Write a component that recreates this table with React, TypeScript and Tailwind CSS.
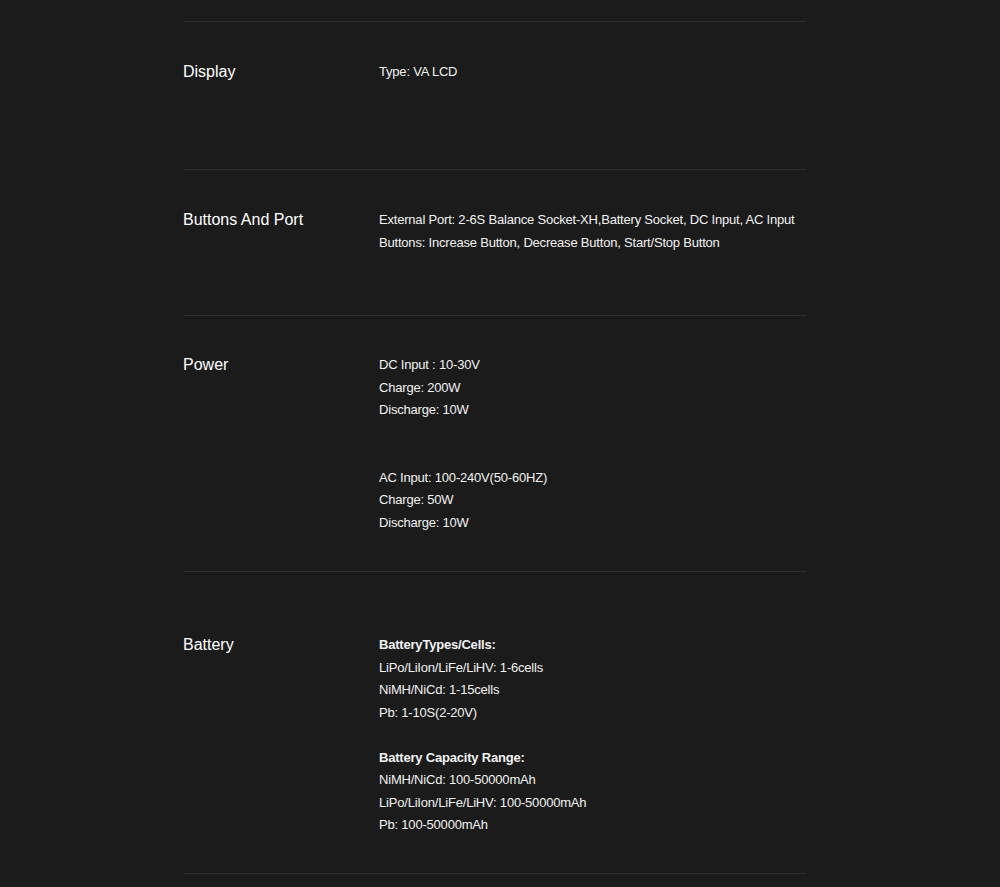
const specs = [
  {
    title: "Display",
    pad: "pt-[39px] pb-[37px]",
    lines: ["Type: VA LCD"],
  },
  {
    title: "Buttons And Port",
    pad: "pt-[39px] pb-[35px]",
    lines: [
      "External Port: 2-6S Balance Socket-XH,Battery Socket, DC Input, AC Input",
      "Buttons: Increase Button, Decrease Button, Start/Stop Button",
    ],
  },
  {
    title: "Power",
    pad: "pt-[38px] pb-[37px]",
    lines: [
      "DC Input : 10-30V",
      "Charge: 200W",
      "Discharge: 10W",
      "",
      "",
      "AC Input: 100-240V(50-60HZ)",
      "Charge: 50W",
      "Discharge: 10W",
    ],
  },
  {
    title: "Battery",
    pad: "pt-[62px] pb-[36px]",
    lines: [
      "*BatteryTypes/Cells:",
      "LiPo/LiIon/LiFe/LiHV: 1-6cells",
      "NiMH/NiCd: 1-15cells",
      "Pb: 1-10S(2-20V)",
      "",
      "*Battery Capacity Range:",
      "NiMH/NiCd: 100-50000mAh",
      "LiPo/LiIon/LiFe/LiHV: 100-50000mAh",
      "Pb: 100-50000mAh",
    ],
  },
];

export default function App() {
  return (
    <div className="min-h-screen bg-[#1b1b1b] pt-[21px] font-['Liberation_Sans',Arial,sans-serif] text-[#f2f2f2]">
      <div className="ml-[183px] w-[623px] border-t border-[#2e2e2e]">
        {specs.map((s) => (
          <div key={s.title} className={`flex border-b border-[#2e2e2e] ${s.pad}`}>
            <h3 className="w-[196px] shrink-0 text-[16px] leading-[22px] text-white">{s.title}</h3>
            <div className="min-h-[71px] whitespace-nowrap text-[13px] leading-[22.5px] tracking-[-0.2px]">
              {s.lines.map((l, i) =>
                l === "" ? (
                  <div key={i} className="h-[22.5px]" />
                ) : l.startsWith("*") ? (
                  <p key={i} className="font-bold">{l.slice(1)}</p>
                ) : (
                  <p key={i}>{l}</p>
                )
              )}
            </div>
          </div>
        ))}
      </div>
    </div>
  );
}
